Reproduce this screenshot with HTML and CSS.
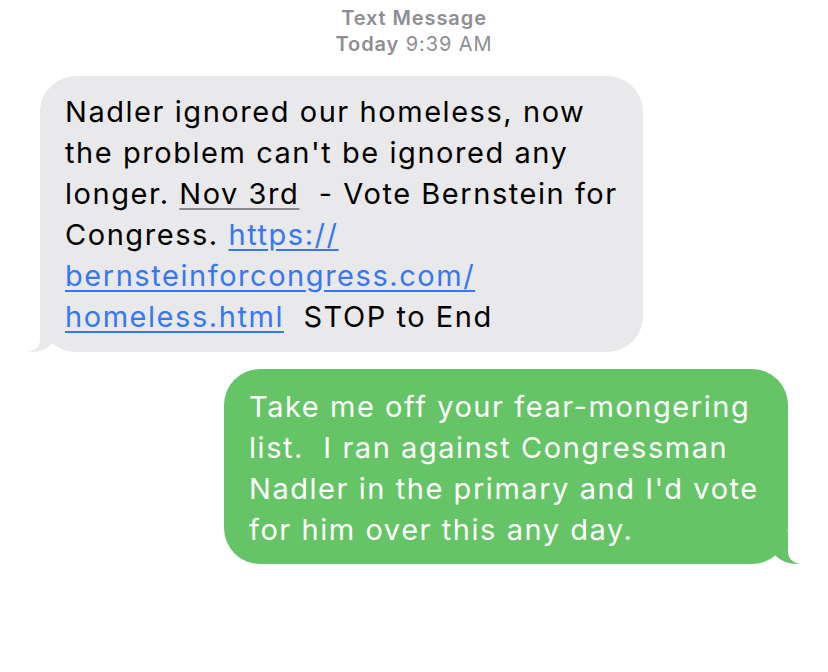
FILE: index.html
```html
<!DOCTYPE html>
<html lang="en">
<head>
    <meta charset="UTF-8">
    <meta name="viewport" content="width=device-width, initial-scale=1.0">
    <title>Text Message</title>
    <link rel="stylesheet" href="styles.css">
</head>
<body>

<div class="thread">
    <div class="stamp">
        <div class="stamp-title">Text Message</div>
        <div class="stamp-time"><b>Today</b> 9:39 AM</div>
    </div>

    <!-- incoming -->
    <div class="row row-in">
        <div class="bubble bubble-in">
            Nadler ignored our homeless, now<br>
            the problem can't be ignored any<br>
            longer. <span class="date">Nov 3rd</span>&nbsp; - Vote Bernstein for<br>
            Congress. <a href="#" class="link">https://</a><br>
            <a href="#" class="link">bernsteinforcongress.com/</a><br>
            <a href="#" class="link">homeless.html</a>&nbsp; STOP to End
        </div>
    </div>

    <!-- outgoing -->
    <div class="row row-out">
        <div class="bubble bubble-out">
            Take me off your fear-mongering<br>
            list.&nbsp; I ran against Congressman<br>
            Nadler in the primary and I'd vote<br>
            for him over this any day.
        </div>
    </div>
</div>

</body>
</html>
```

FILE: styles.css
```css
body {
    margin: 0;
    background: #fff;
    font-family: "Inter", "Roboto", sans-serif;
}

.thread {
    width: 828px;
    padding: 5px 40px 0;
    box-sizing: border-box;
}

/* Header timestamp */
.stamp {
    text-align: center;
    color: #8e8e93;
    font-size: 20px;
    letter-spacing: 0.9px;
    line-height: 26px;
    margin-bottom: 19px;
}

.stamp-title {
    font-weight: 600;
}

.stamp-time b {
    font-weight: 600;
}

.row {
    display: flex;
    margin-bottom: 17px;
}

.row-in {
    justify-content: flex-start;
}

.row-out {
    justify-content: flex-end;
}

/* Bubbles */
.bubble {
    position: relative;
    box-sizing: border-box;
    font-size: 29px;
    letter-spacing: 1.55px;
    line-height: 41px;
    border-radius: 36px;
    padding: 15px 20px 15px 25px;
    white-space: nowrap;
}

.bubble-in {
    width: 603px;
    background: #e9e9eb;
    color: #000;
}

.bubble-out {
    width: 564px;
    background: #65c466;
    color: #fff;
    padding-top: 17px;
    padding-bottom: 14px;
}

/* tails */
.bubble-in::before,
.bubble-out::before {
    content: "";
    position: absolute;
    bottom: 0;
    width: 30px;
    height: 32px;
}

.bubble-in::before {
    left: -12px;
    background: #e9e9eb;
    border-bottom-right-radius: 26px 22px;
}

.bubble-out::before {
    right: -12px;
    background: #65c466;
    border-bottom-left-radius: 26px 22px;
}

.bubble-in::after,
.bubble-out::after {
    content: "";
    position: absolute;
    bottom: 0;
    width: 14px;
    height: 34px;
    background: #fff;
}

.bubble-in::after {
    left: -14px;
    border-bottom-right-radius: 14px 12px;
}

.bubble-out::after {
    right: -14px;
    border-bottom-left-radius: 14px 12px;
}

.date {
    text-decoration: underline;
    text-decoration-color: #8a8a8e;
    text-underline-offset: 4px;
}

.link {
    color: #3478f6;
    text-decoration: underline;
    text-underline-offset: 4px;
}
```
